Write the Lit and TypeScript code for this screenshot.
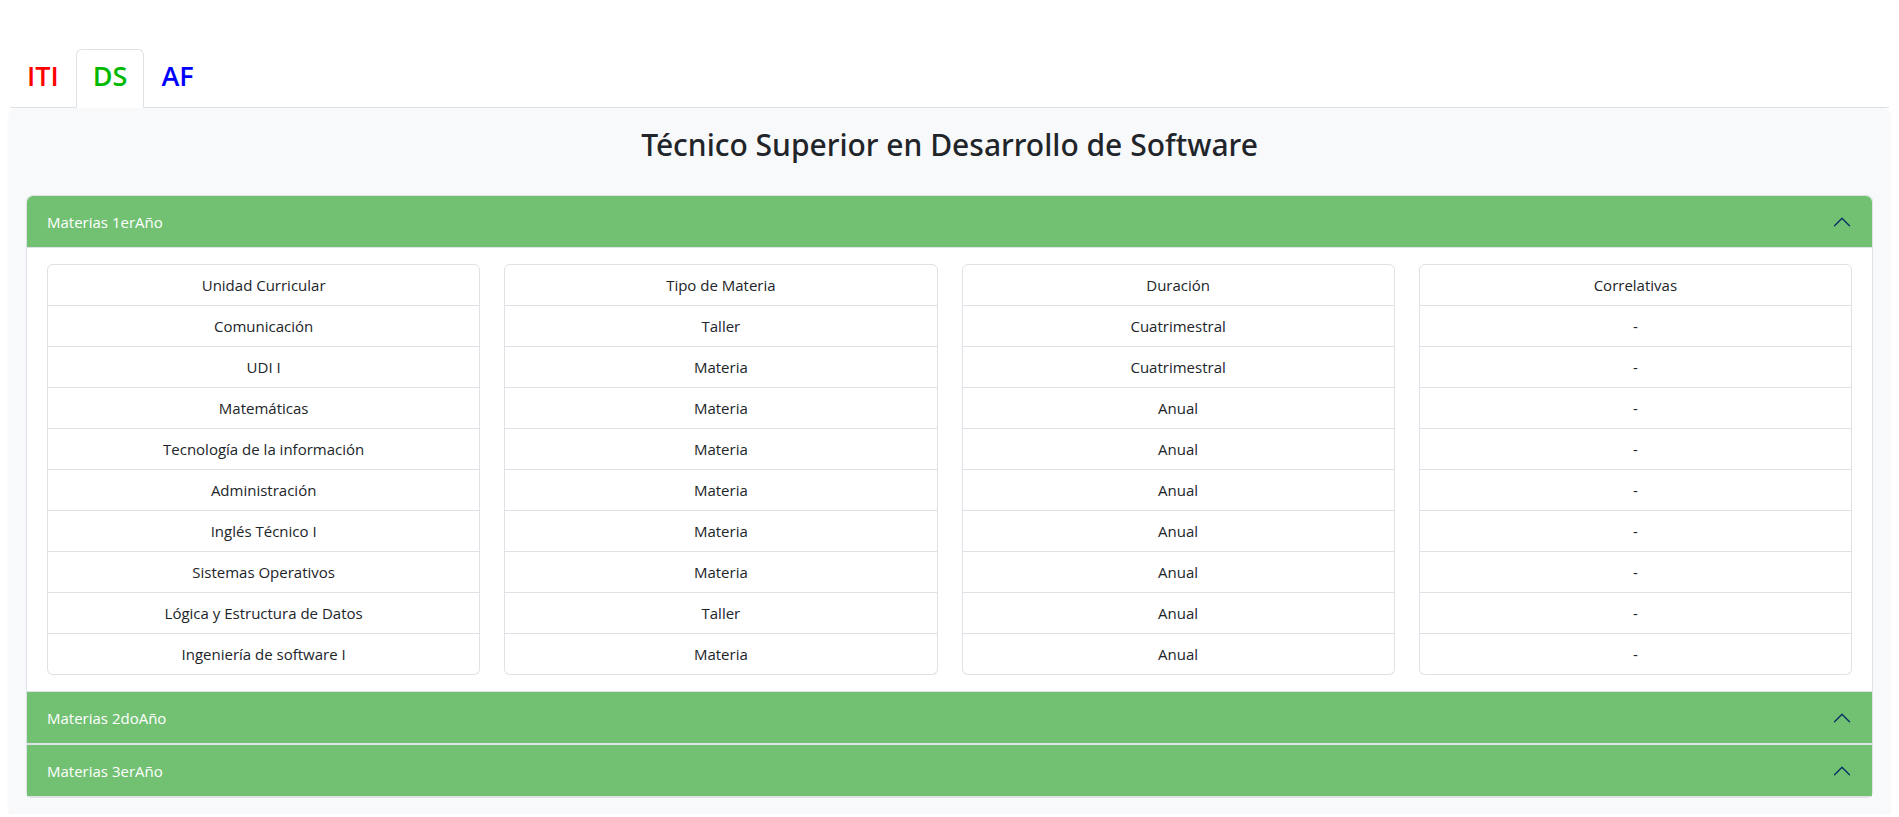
import { LitElement, html, css, svg, nothing } from "lit";
import { customElement, property, state } from "lit/decorators.js";
import { classMap } from "lit/directives/class-map.js";

interface Career {
  id: string;
  title: string;
}

interface Year {
  id: string;
  label: string;
  rows: string[][];
}

const CAREERS: Career[] = [
  { id: "ITI", title: "Técnico Superior en Infraestructura de Tecnología de la Información" },
  { id: "DS", title: "Técnico Superior en Desarrollo de Software" },
  { id: "AF", title: "Técnico Superior en Análisis Funcional" },
];

const COLUMNS = ["Unidad Curricular", "Tipo de Materia", "Duración", "Correlativas"];

const YEARS: Year[] = [
  {
    id: "y1",
    label: "Materias 1erAño",
    rows: [
      ["Comunicación", "Taller", "Cuatrimestral", "-"],
      ["UDI I", "Materia", "Cuatrimestral", "-"],
      ["Matemáticas", "Materia", "Anual", "-"],
      ["Tecnología de la información", "Materia", "Anual", "-"],
      ["Administración", "Materia", "Anual", "-"],
      ["Inglés Técnico I", "Materia", "Anual", "-"],
      ["Sistemas Operativos", "Materia", "Anual", "-"],
      ["Lógica y Estructura de Datos", "Taller", "Anual", "-"],
      ["Ingeniería de software I", "Materia", "Anual", "-"],
    ],
  },
  { id: "y2", label: "Materias 2doAño", rows: [] },
  { id: "y3", label: "Materias 3erAño", rows: [] },
];

const chevron = svg`<path fill-rule="evenodd" d="M1.646 4.646a.5.5 0 0 1 .708 0L8 10.293l5.646-5.647a.5.5 0 0 1 .708.708l-6 6a.5.5 0 0 1-.708 0l-6-6a.5.5 0 0 1 0-.708z"/>`;

@customElement("subject-table")
class SubjectTable extends LitElement {
  @property({ attribute: false }) rows: string[][] = [];

  static styles = css`
    :host {
      display: block;
      margin: 0 -24px;
    }
    .table {
      width: 100%;
      table-layout: fixed;
      border-collapse: separate;
      border-spacing: 24px 0;
    }
    .cell {
      box-sizing: border-box;
      height: 41px;
      padding: 8px 16px;
      border: 1px solid #dee2e6;
      border-top: 0;
      background: #fff;
      font-weight: 400;
      line-height: 24px;
      text-align: center;
    }
    .head {
      height: 42px;
      border-top: 1px solid #dee2e6;
      border-radius: 6px 6px 0 0;
    }
    .last .cell {
      border-radius: 0 0 6px 6px;
    }
  `;

  render() {
    return html`
      <table class="table">
        <thead>
          <tr>
            ${COLUMNS.map((c) => html`<th class="cell head" scope="col">${c}</th>`)}
          </tr>
        </thead>
        <tbody>
          ${this.rows.map(
            (row, i) => html`<tr class=${classMap({ last: i === this.rows.length - 1 })}>
              ${row.map((value) => html`<td class="cell">${value}</td>`)}
            </tr>`
          )}
        </tbody>
      </table>
    `;
  }
}

@customElement("app-root")
class AppRoot extends LitElement {
  @state() private career = "DS";
  @state() private openYear = "y1";

  static styles = css`
    :host {
      display: block;
      padding: 49px 10px 0;
      color: #212529;
      background: #fff;
      font-family: "Segoe UI", "Open Sans", "Noto Sans", sans-serif;
      font-size: 15px;
      line-height: 24px;
    }
    .tabs {
      display: flex;
      border-bottom: 1px solid #dee2e6;
    }
    .tab {
      margin: 0 0 -1px;
      padding: 9px 16px 15px;
      border: 1px solid transparent;
      border-radius: 6px 6px 0 0;
      background: none;
      font-family: inherit;
      font-size: 27px;
      font-weight: 600;
      line-height: 33px;
      cursor: pointer;
    }
    .tab.active {
      border-color: #dee2e6 #dee2e6 #fff;
      background: #fff;
    }
    .iti {
      color: #f00;
    }
    .ds {
      color: #00b900;
    }
    .af {
      color: #00f;
    }
    .panel {
      padding: 16px;
      border-radius: 6px;
      background: #f8f9fa;
      box-shadow: 0 2px 4px rgba(0, 0, 0, 0.075);
    }
    .title {
      margin: 0 0 30px;
      font-family: "Segoe UI", "Noto Sans", sans-serif;
      font-size: 30px;
      font-weight: 500;
      line-height: 41px;
      text-align: center;
    }
    .item {
      border: 1px solid #dee2e6;
      background: #fff;
    }
    .item + .item {
      border-top: 0;
    }
    .item:first-child,
    .item:first-child .toggle {
      border-radius: 6px 6px 0 0;
    }
    .item:last-child {
      border-radius: 0 0 6px 6px;
    }
    .heading {
      margin: 0;
      border-bottom: 1px solid #dee2e6;
      font-size: 15px;
    }
    .toggle {
      display: flex;
      align-items: center;
      justify-content: space-between;
      width: 100%;
      height: 51px;
      padding: 0 20px;
      border: 0;
      background: #72c173;
      color: #fff;
      font-family: inherit;
      font-size: 15px;
      line-height: 20px;
      text-align: left;
      cursor: pointer;
    }
    .chevron {
      width: 20px;
      height: 20px;
      fill: #052c65;
      transform: rotate(180deg);
    }
    .body {
      padding: 16px 20px;
    }
  `;

  private toggle(id: string) {
    this.openYear = this.openYear === id ? "" : id;
  }

  render() {
    const current = CAREERS.find((c) => c.id === this.career)!;
    return html`
      <div class="tabs" role="tablist">
        ${CAREERS.map(
          (c) => html`<button
            class=${classMap({ tab: true, [c.id.toLowerCase()]: true, active: c.id === this.career })}
            type="button"
            role="tab"
            id=${"tab-" + c.id}
            aria-controls="panel"
            aria-selected=${c.id === this.career ? "true" : "false"}
            @click=${() => (this.career = c.id)}
          >${c.id}</button>`
        )}
      </div>
      <section class="panel" id="panel" role="tabpanel" aria-labelledby=${"tab-" + this.career}>
        <h1 class="title">${current.title}</h1>
        <div class="accordion">
          ${YEARS.map((y) => {
            const open = y.id === this.openYear;
            return html`<div class="item">
              <h2 class="heading">
                <button
                  class="toggle"
                  type="button"
                  aria-expanded=${open ? "true" : "false"}
                  @click=${() => this.toggle(y.id)}
                >
                  <span>${y.label}</span>
                  <svg class="chevron" viewBox="0 0 16 16" aria-hidden="true">${chevron}</svg>
                </button>
              </h2>
              ${open && y.rows.length
                ? html`<div class="body"><subject-table .rows=${y.rows}></subject-table></div>`
                : nothing}
            </div>`;
          })}
        </div>
      </section>
    `;
  }
}
